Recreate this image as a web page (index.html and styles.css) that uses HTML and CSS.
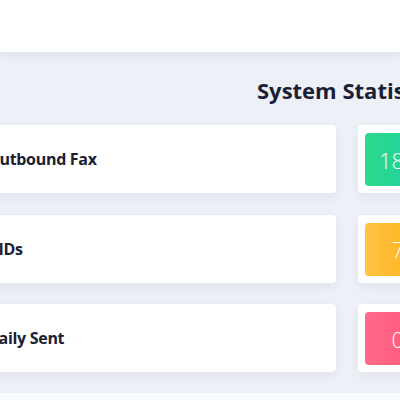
FILE: index.html
```html
<!DOCTYPE html>
<html lang="en">
<head>
  <meta charset="UTF-8">
  <meta name="viewport" content="width=device-width, initial-scale=1.0">
  <title>System Statistics</title>
  <link rel="stylesheet" href="styles.css">
</head>
<body>
  <header class="topbar"></header>

  <section class="stats">
    <h2 class="stats-title">System Statistics</h2>

    <div class="stats-list">
      <div class="stat-row">
        <div class="stat-label">Outbound Fax</div>
        <div class="stat-value">
          <div class="value-box green">18</div>
        </div>
      </div>
      <div class="stat-row">
        <div class="stat-label">DIDs</div>
        <div class="stat-value">
          <div class="value-box yellow">7</div>
        </div>
      </div>
      <div class="stat-row">
        <div class="stat-label">Daily Sent</div>
        <div class="stat-value">
          <div class="value-box pink">0</div>
        </div>
      </div>
    </div>
  </section>
</body>
</html>
```

FILE: styles.css
```css
body {
  margin: 0;
  font-family: 'Open Sans', 'Noto Sans', sans-serif;
  background: #f9fafc;
  overflow: hidden;
}
.topbar {
  position: relative;
  z-index: 1;
  height: 52px;
  background: #ffffff;
  box-shadow: 0 2px 10px rgba(40, 50, 80, 0.10);
}
.stats {
  background: #edf0f6;
  padding: 23px 0 21px;
}
.stats-title {
  margin: 0 0 20px 257px;
  font-size: 22px;
  line-height: 30px;
  font-weight: 700;
  color: #1b1f36;
  white-space: nowrap;
}
.stats-list {
  display: flex;
  flex-direction: column;
  gap: 21.5px;
  margin-left: -44px;
}
.stat-row {
  display: grid;
  grid-template-columns: 380px 60px;
  gap: 22px;
  height: 68px;
}
.stat-label {
  display: flex;
  align-items: center;
  padding-left: 31px;
  background: #ffffff;
  border-radius: 4px;
  box-shadow: 0 4px 12px rgba(30, 40, 80, 0.06);
  font-size: 16px;
  font-weight: 700;
  letter-spacing: -0.3px;
  color: #1c2033;
  white-space: nowrap;
}
.stat-value {
  background: #ffffff;
  border-radius: 4px;
  box-shadow: 0 4px 12px rgba(30, 40, 80, 0.06);
  padding: 8px 7px 7px;
}
.value-box {
  display: flex;
  align-items: center;
  justify-content: flex-end;
  height: 100%;
  padding-right: 7px;
  border-radius: 4px;
  color: #ffffff;
  font-size: 22px;
  font-weight: 300;
}
.green {
  background: linear-gradient(to right, #2fd98a, #1fd39b);
}
.yellow {
  background: linear-gradient(to right, #ffc445, #ffb420);
}
.pink {
  background: linear-gradient(to right, #ff6a88, #ff5a7e);
}
```
